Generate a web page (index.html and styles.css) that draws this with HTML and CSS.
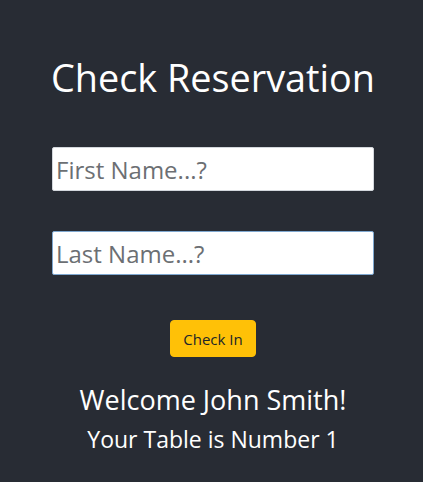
FILE: index.html
```html
<!DOCTYPE html>
<html>
<head>
<meta charset="utf-8">
<link rel="stylesheet" href="styles.css">
</head>
<body>
<main class="app">
  <h1 class="title">Check Reservation</h1>
  <form class="form">
    <input class="field" type="text" placeholder="First Name...?">
    <input class="field field-focus" type="text" placeholder="Last Name...?">
    <button class="btn" type="button">Check In</button>
  </form>
  <p class="welcome">Welcome John Smith!</p>
  <p class="table">Your Table is Number 1</p>
</main>
</body>
</html>
```
FILE: styles.css
```css
html, body {
  margin: 0;
  padding: 0;
  background: #282c34;
  height: 100%;
}
body {
  font-family: "Open Sans", "Noto Sans", sans-serif;
  color: #ffffff;
}
.app {
  display: flex;
  flex-direction: column;
  align-items: center;
  padding-top: 53px;
  padding-left: 3px;
}
.title {
  margin: 0;
  font-weight: 400;
  font-size: 37.8px;
  line-height: 50px;
}
.form {
  display: flex;
  flex-direction: column;
  align-items: center;
  margin-top: 44px;
}
.field {
  box-sizing: border-box;
  width: 322px;
  height: 44px;
  margin: 0 0 40px 0;
  padding: 0 3px;
  border: 1px solid #d3d7dc;
  border-radius: 2px;
  background: #fff;
  font-family: "Open Sans", "Noto Sans", sans-serif;
  font-size: 24px;
  color: #333;
  outline: none;
}
.field::placeholder {
  color: #6c6f73;
}
.field-focus {
  border-color: #7fa8d0;
}
.btn {
  margin-top: 5px;
  width: 86px;
  height: 37px;
  background: #ffc107;
  border: 1px solid #ffc107;
  border-radius: 4px;
  font-family: "Open Sans", "Noto Sans", sans-serif;
  font-size: 15px;
  color: #212529;
  padding: 0;
}
.welcome {
  margin: 25px 0 0 0;
  font-size: 27px;
  line-height: 36px;
}
.table {
  margin: 5px 0 0 0;
  font-size: 23px;
  line-height: 32px;
}
```
